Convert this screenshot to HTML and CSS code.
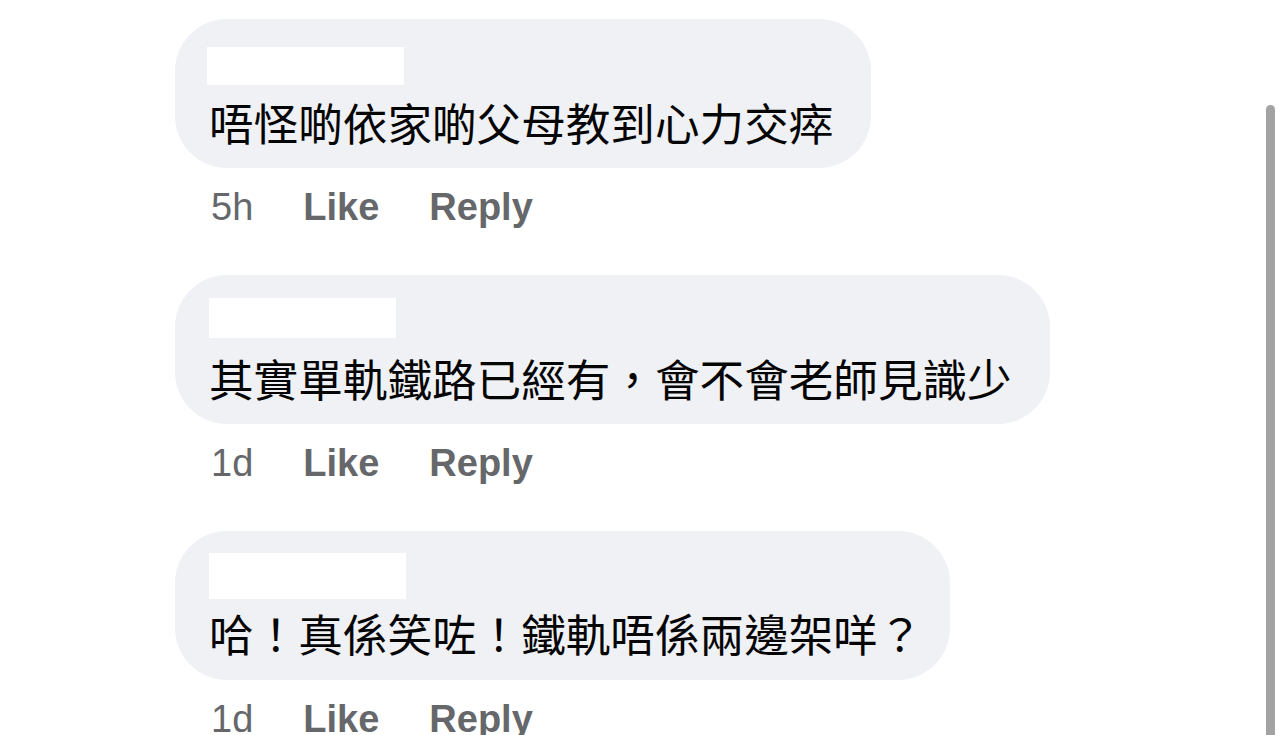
FILE: index.html
```html
<!DOCTYPE html>
<html lang="zh-Hant">
<head>
    <meta charset="UTF-8">
    <meta name="viewport" content="width=device-width, initial-scale=1.0">
    <title>Comments</title>
    <link rel="stylesheet" href="styles.css">
</head>
<body>
    <div class="comments">
        <div class="comment">
            <div class="bubble">
                <div class="name name-1"></div>
                <div class="text">唔怪啲依家啲父母教到心力交瘁</div>
            </div>
            <div class="actions">
                <span class="time">5h</span>
                <span class="action">Like</span>
                <span class="action">Reply</span>
            </div>
        </div>

        <div class="comment">
            <div class="bubble">
                <div class="name name-2"></div>
                <div class="text">其實單軌鐵路已經有，會不會老師見識少</div>
            </div>
            <div class="actions">
                <span class="time">1d</span>
                <span class="action">Like</span>
                <span class="action">Reply</span>
            </div>
        </div>

        <div class="comment">
            <div class="bubble bubble-short">
                <div class="name name-3"></div>
                <div class="text">哈！真係笑咗！鐵軌唔係兩邊架咩？</div>
            </div>
            <div class="actions">
                <span class="time">1d</span>
                <span class="action">Like</span>
                <span class="action">Reply</span>
            </div>
        </div>
    </div>

    <!-- scrollbar thumb -->
    <div class="scroll-thumb"></div>
</body>
</html>
```

FILE: styles.css
```css
body, html {
    margin: 0;
    padding: 0;
    height: 100%;
    background-color: #ffffff;
    overflow: hidden;
    font-family: "Liberation Sans", Arial, "Noto Sans CJK TC", sans-serif;
}

.comments {
    display: flex;
    flex-direction: column;
    align-items: flex-start;
    padding: 19px 0 0 175px;
}

.comment {
    display: flex;
    flex-direction: column;
    align-items: flex-start;
    margin-bottom: 46px;
}

.bubble {
    background-color: #f0f1f5;
    border-radius: 52px;
    padding: 0 38px 20px 34px;
    height: 149px;
    box-sizing: border-box;
}

.bubble-short {
    padding-right: 27px;
}

.name {
    background-color: #ffffff;
}

.name-1 {
    width: 197px;
    height: 38px;
    margin: 28px 0 11px -2px;
}

.name-2 {
    width: 187px;
    height: 40px;
    margin: 23px 0 14px 0;
}

.name-3 {
    width: 197px;
    height: 46px;
    margin: 22px 0 8px 0;
}

.text {
    font-family: "Noto Sans CJK TC", "Noto Sans CJK SC", sans-serif;
    font-size: 44.6px;
    line-height: 52px;
    color: #050505;
    white-space: nowrap;
}

.actions {
    display: flex;
    gap: 50px;
    margin-top: 17px;
    padding-left: 36px;
    font-size: 38px;
    line-height: 44px;
    color: #65676b;
}

.action {
    font-weight: bold;
}

.scroll-thumb {
    position: fixed;
    top: 105px;
    right: 9px;
    width: 9px;
    height: 700px;
    background-color: #a3a3a3;
    border-radius: 5px;
}
```
